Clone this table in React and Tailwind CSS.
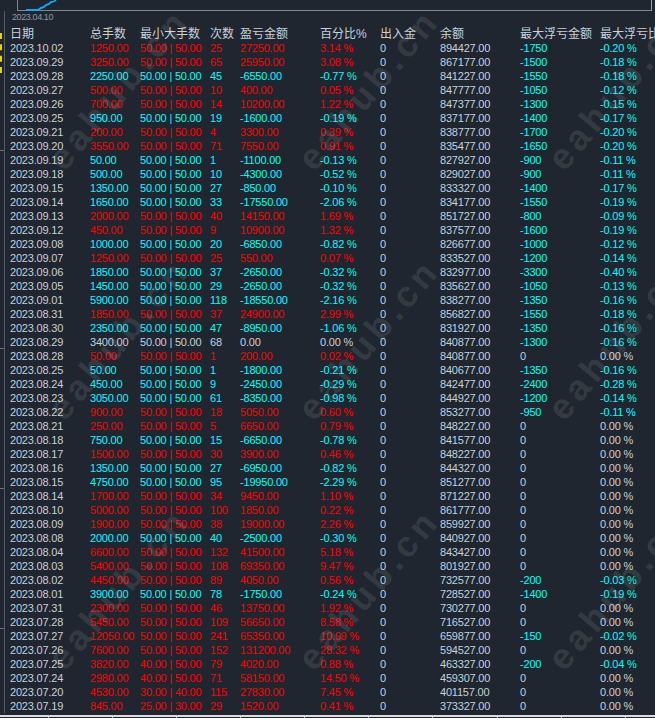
import React from "react";

const rows = [
  ["2023.10.02", "1250.00", "50.00", "50.00", "25", "27250.00", "3.14", "894427.00", "-1750", "-0.20"],
  ["2023.09.29", "3250.00", "50.00", "50.00", "65", "25950.00", "3.08", "867177.00", "-1500", "-0.18"],
  ["2023.09.28", "2250.00", "50.00", "50.00", "45", "-6550.00", "-0.77", "841227.00", "-1550", "-0.18"],
  ["2023.09.27", "500.00", "50.00", "50.00", "10", "400.00", "0.05", "847777.00", "-1050", "-0.12"],
  ["2023.09.26", "700.00", "50.00", "50.00", "14", "10200.00", "1.22", "847377.00", "-1300", "-0.15"],
  ["2023.09.25", "950.00", "50.00", "50.00", "19", "-1600.00", "-0.19", "837177.00", "-1400", "-0.17"],
  ["2023.09.21", "200.00", "50.00", "50.00", "4", "3300.00", "0.39", "838777.00", "-1700", "-0.20"],
  ["2023.09.20", "3550.00", "50.00", "50.00", "71", "7550.00", "0.91", "835477.00", "-1650", "-0.20"],
  ["2023.09.19", "50.00", "50.00", "50.00", "1", "-1100.00", "-0.13", "827927.00", "-900", "-0.11"],
  ["2023.09.18", "500.00", "50.00", "50.00", "10", "-4300.00", "-0.52", "829027.00", "-900", "-0.11"],
  ["2023.09.15", "1350.00", "50.00", "50.00", "27", "-850.00", "-0.10", "833327.00", "-1400", "-0.17"],
  ["2023.09.14", "1650.00", "50.00", "50.00", "33", "-17550.00", "-2.06", "834177.00", "-1550", "-0.19"],
  ["2023.09.13", "2000.00", "50.00", "50.00", "40", "14150.00", "1.69", "851727.00", "-800", "-0.09"],
  ["2023.09.12", "450.00", "50.00", "50.00", "9", "10900.00", "1.32", "837577.00", "-1600", "-0.19"],
  ["2023.09.08", "1000.00", "50.00", "50.00", "20", "-6850.00", "-0.82", "826677.00", "-1000", "-0.12"],
  ["2023.09.07", "1250.00", "50.00", "50.00", "25", "550.00", "0.07", "833527.00", "-1200", "-0.14"],
  ["2023.09.06", "1850.00", "50.00", "50.00", "37", "-2650.00", "-0.32", "832977.00", "-3300", "-0.40"],
  ["2023.09.05", "1450.00", "50.00", "50.00", "29", "-2650.00", "-0.32", "835627.00", "-1050", "-0.13"],
  ["2023.09.01", "5900.00", "50.00", "50.00", "118", "-18550.00", "-2.16", "838277.00", "-1350", "-0.16"],
  ["2023.08.31", "1850.00", "50.00", "50.00", "37", "24900.00", "2.99", "856827.00", "-1550", "-0.18"],
  ["2023.08.30", "2350.00", "50.00", "50.00", "47", "-8950.00", "-1.06", "831927.00", "-1350", "-0.16"],
  ["2023.08.29", "3400.00", "50.00", "50.00", "68", "0.00", "0.00", "840877.00", "-1300", "-0.16"],
  ["2023.08.28", "50.00", "50.00", "50.00", "1", "200.00", "0.02", "840877.00", "0", "0.00"],
  ["2023.08.25", "50.00", "50.00", "50.00", "1", "-1800.00", "-0.21", "840677.00", "-1350", "-0.16"],
  ["2023.08.24", "450.00", "50.00", "50.00", "9", "-2450.00", "-0.29", "842477.00", "-2400", "-0.28"],
  ["2023.08.23", "3050.00", "50.00", "50.00", "61", "-8350.00", "-0.98", "844927.00", "-1200", "-0.14"],
  ["2023.08.22", "900.00", "50.00", "50.00", "18", "5050.00", "0.60", "853277.00", "-950", "-0.11"],
  ["2023.08.21", "250.00", "50.00", "50.00", "5", "6650.00", "0.79", "848227.00", "0", "0.00"],
  ["2023.08.18", "750.00", "50.00", "50.00", "15", "-6650.00", "-0.78", "841577.00", "0", "0.00"],
  ["2023.08.17", "1500.00", "50.00", "50.00", "30", "3900.00", "0.46", "848227.00", "0", "0.00"],
  ["2023.08.16", "1350.00", "50.00", "50.00", "27", "-6950.00", "-0.82", "844327.00", "0", "0.00"],
  ["2023.08.15", "4750.00", "50.00", "50.00", "95", "-19950.00", "-2.29", "851277.00", "0", "0.00"],
  ["2023.08.14", "1700.00", "50.00", "50.00", "34", "9450.00", "1.10", "871227.00", "0", "0.00"],
  ["2023.08.10", "5000.00", "50.00", "50.00", "100", "1850.00", "0.22", "861777.00", "0", "0.00"],
  ["2023.08.09", "1900.00", "50.00", "50.00", "38", "19000.00", "2.26", "859927.00", "0", "0.00"],
  ["2023.08.08", "2000.00", "50.00", "50.00", "40", "-2500.00", "-0.30", "840927.00", "0", "0.00"],
  ["2023.08.04", "6600.00", "50.00", "50.00", "132", "41500.00", "5.18", "843427.00", "0", "0.00"],
  ["2023.08.03", "5400.00", "50.00", "50.00", "108", "69350.00", "9.47", "801927.00", "0", "0.00"],
  ["2023.08.02", "4450.00", "50.00", "50.00", "89", "4050.00", "0.56", "732577.00", "-200", "-0.03"],
  ["2023.08.01", "3900.00", "50.00", "50.00", "78", "-1750.00", "-0.24", "728527.00", "-1400", "-0.19"],
  ["2023.07.31", "2300.00", "50.00", "50.00", "46", "13750.00", "1.92", "730277.00", "0", "0.00"],
  ["2023.07.28", "5450.00", "50.00", "50.00", "109", "56650.00", "8.58", "716527.00", "0", "0.00"],
  ["2023.07.27", "12050.00", "50.00", "50.00", "241", "65350.00", "10.99", "659877.00", "-150", "-0.02"],
  ["2023.07.26", "7600.00", "50.00", "50.00", "152", "131200.00", "28.32", "594527.00", "0", "0.00"],
  ["2023.07.25", "3820.00", "40.00", "50.00", "79", "4020.00", "0.88", "463327.00", "-200", "-0.04"],
  ["2023.07.24", "2980.00", "40.00", "50.00", "71", "58150.00", "14.50", "459307.00", "0", "0.00"],
  ["2023.07.20", "4530.00", "30.00", "40.00", "115", "27830.00", "7.45", "401157.00", "0", "0.00"],
  ["2023.07.19", "845.00", "25.00", "30.00", "29", "1520.00", "0.41", "373327.00", "0", "0.00"],
];

const headers = ["日期", "总手数", "最小大手数", "次数", "盈亏金额", "百分比%", "出入金", "余额", "最大浮亏金额", "最大浮亏比例"];

const GRID = "grid grid-cols-[80px_50px_70px_30px_80px_60px_60px_80px_80px_80px] h-[14px] leading-[14px] whitespace-nowrap overflow-hidden";

const RED = "text-[#ff0000]";
const CYAN = "text-[#00ffff]";
const GRAY = "text-[#c8d0da]";

function Row({ r }) {
  const [date, lots, mn, mx, cnt, pnl, pct, bal, dd, ddp] = r;
  const c = pnl.startsWith("-") ? CYAN : pnl === "0.00" ? GRAY : RED;
  const dc = dd === "0" ? GRAY : CYAN;
  return (
    <div className={GRID}>
      <span className={GRAY}>{date}</span>
      <span className={c}>{lots}</span>
      <span className={c}>{mn} | {mx}</span>
      <span className={c}>{cnt}</span>
      <span className={c}>{pnl}</span>
      <span className={c}>{pct} %</span>
      <span className={GRAY}>0</span>
      <span className={GRAY}>{bal}</span>
      <span className={dc}>{dd}</span>
      <span className={dc}>{ddp} %</span>
    </div>
  );
}

const marks = [
  [65, 165], [315, 165], [565, 165],
  [65, 415], [315, 415], [565, 415],
  [65, 665], [315, 665], [565, 665],
];

export default function App() {
  return (
    <div className="relative w-[655px] h-[718px] overflow-hidden bg-[#1f262f] text-[#c8d0da] font-['Liberation_Sans','Noto_Sans_CJK_SC',sans-serif]">
      {/* chart strip */}
      <svg width="655" height="11" className="block">
        <line x1="17.5" y1="0" x2="17.5" y2="11" stroke="#7f868f" strokeWidth="1" />
        <line x1="17" y1="10.5" x2="651" y2="10.5" stroke="#7f868f" strokeWidth="1" />
        <line x1="651.5" y1="0" x2="651.5" y2="11" stroke="#9aa0a8" strokeWidth="1" />
        <polyline
          points="26,10 38,10 41,8 44,7 46,5 49,4 51,2 54,1 56,0"
          stroke="#14a8f2"
          strokeWidth="2"
          fill="none"
        />
      </svg>

      <div className="ml-[4px] border-l border-[#555c66] pl-[5px]">
        <div className="h-[16px] pl-[2px] pt-[1px] text-[9px] leading-[10px] tracking-[-0.4px] text-[#8f97a1]">
          2023.04.10
        </div>
        <div className={GRID + " text-[12px]"}>
          {headers.map((h) => (
            <span key={h}>{h}</span>
          ))}
        </div>
        <div className="text-[11px] tracking-[-0.2px]">
          {rows.map((r) => (
            <Row key={r[0]} r={r} />
          ))}
        </div>
      </div>

      {/* bottom axis */}
      <svg width="655" height="5" className="block">
        <rect x="0" y="2" width="655" height="2" fill="#dcdcdc" />
        {[48, 112, 176, 240, 304, 368, 432, 497, 561, 625].map((x) => (
          <rect key={x} x={x} y="2" width="1" height="3" fill="#dcdcdc" />
        ))}
      </svg>

      {/* left scale marks */}
      <div className="absolute left-0 top-[33px] h-[40px] border-l-2 border-dashed border-[#e8d400]" />
      {[150, 348, 488, 628].map((y) => (
        <div key={y} className="absolute left-0 w-[4px] h-px bg-[#6b727c]" style={{ top: y }} />
      ))}

      {/* watermark */}
      <div className="pointer-events-none absolute inset-0">
        {marks.map(([x, y]) => (
          <span
            key={x + "-" + y}
            className="absolute origin-left -rotate-[50deg] whitespace-nowrap font-['Liberation_Sans',sans-serif] text-[36px] font-bold leading-[36px] tracking-[5px] text-white/[0.11]"
            style={{ left: x - 10, top: y - 18 }}
          >
            eahub.cn
          </span>
        ))}
      </div>
    </div>
  );
}
